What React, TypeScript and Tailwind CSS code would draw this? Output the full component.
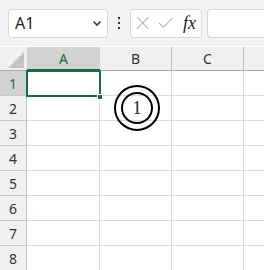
import React from "react";

const cols = ["A", "B", "C", ""];
const rows = [1, 2, 3, 4, 5, 6, 7, 8];

export default function App() {
  return (
    <div
      className="w-[264px] h-[270px] overflow-hidden bg-white relative"
      style={{ fontFamily: '"Segoe UI", "Noto Sans", "Liberation Sans", sans-serif' }}
    >
      {/* toolbar */}
      <div className="h-[46px] bg-[#f3f3f3] flex items-center pl-[8px] gap-0">
        <div className="w-[100px] h-[29px] bg-white border border-[#d6d6d6] rounded-[4px] flex items-center pl-[6px] pr-[5px]">
          <span className="text-[16px] text-[#222] flex-1 leading-none">A1</span>
          <svg width="10" height="7" viewBox="0 0 10 7">
            <path d="M1.5 1.5 L5 5 L8.5 1.5" fill="none" stroke="#333" strokeWidth="1.6" />
          </svg>
        </div>
        <div className="w-[22px] flex flex-col items-center gap-[3px]">
          <div className="w-[2px] h-[2px] bg-[#333]" />
          <div className="w-[2px] h-[2px] bg-[#333]" />
          <div className="w-[2px] h-[2px] bg-[#333]" />
        </div>
        <div className="w-[72px] h-[29px] bg-white border border-[#d6d6d6] rounded-[4px] flex items-center px-[5px] gap-[8px]">
          <svg width="14" height="14" viewBox="0 0 14 14">
            <path d="M1 1 L13 13 M13 1 L1 13" stroke="#b5b5b5" strokeWidth="1.1" />
          </svg>
          <svg width="16" height="12" viewBox="0 0 16 12">
            <path d="M1 6 L5.5 10.5 L15 1" fill="none" stroke="#b5b5b5" strokeWidth="1.1" />
          </svg>
          <span
            className="text-[18px] italic text-[#222] leading-none ml-[2px]"
            style={{ fontFamily: '"Liberation Serif", "DejaVu Serif", serif' }}
          >
            fx
          </span>
        </div>
        <div className="ml-[5px] flex-1 h-[29px] bg-white border border-[#d6d6d6] rounded-l-[4px] border-r-0" />
      </div>

      {/* grid */}
      <div className="mt-[1px] relative">
        {/* header row */}
        <div className="flex h-[24px] bg-[#f0f0f0] border-b border-[#ababab]">
          <div className="w-[27px] shrink-0 h-full relative bg-[#f0f0f0]">
            <svg width="27" height="23" viewBox="0 0 27 23" className="absolute left-0 top-0">
              <path d="M24 5 L24 21 L8 21 Z" fill="#c4c4c4" />
            </svg>
          </div>
          <div className="w-[73px] shrink-0 h-full bg-[#d2d2d2] flex items-center justify-center text-[14px] text-[#1e6b41] border-b-[1px] border-[#1e6b41]">
            A
          </div>
          {cols.slice(1).map((c, i) => (
            <div
              key={i}
              className="w-[72px] shrink-0 h-full flex items-center justify-center text-[14px] text-[#333] border-r border-[#bbbbbb]"
            >
              {c}
            </div>
          ))}
        </div>
        {rows.map((r) => (
          <div key={r} className="flex h-[25px]">
            <div
              className={`w-[27px] shrink-0 h-full flex items-center justify-center text-[14px] border-b border-r border-[#c8c8c8] ${
                r === 1 ? "bg-[#d2d2d2] text-[#1e6b41] border-r-[#1e6b41]" : "bg-[#f0f0f0] text-[#333]"
              }`}
            >
              {r}
            </div>
            <div className="w-[73px] shrink-0 h-full border-b border-r border-[#dcdcdc]" />
            <div className="w-[72px] shrink-0 h-full border-b border-r border-[#dcdcdc]" />
            <div className="w-[72px] shrink-0 h-full border-b border-r border-[#dcdcdc]" />
            <div className="w-[72px] shrink-0 h-full border-b border-r border-[#dcdcdc]" />
          </div>
        ))}

        {/* selection A1 */}
        <div className="absolute left-[26px] top-[23px] w-[75px] h-[27px] border-2 border-[#1e6b41]" />
        <div className="absolute left-[97px] top-[47px] w-[6px] h-[6px] bg-[#1e6b41] border border-white" />

        {/* circled 1 */}
        <div className="absolute left-[114px] top-[38px] w-[46px] h-[46px] rounded-full border-2 border-black flex items-center justify-center">
          <div
            className="w-[32px] h-[32px] rounded-full border-2 border-black flex items-center justify-center text-[18px] text-[#222] leading-none"
            style={{ fontFamily: '"Liberation Serif", serif' }}
          >
            1
          </div>
        </div>
      </div>
    </div>
  );
}
